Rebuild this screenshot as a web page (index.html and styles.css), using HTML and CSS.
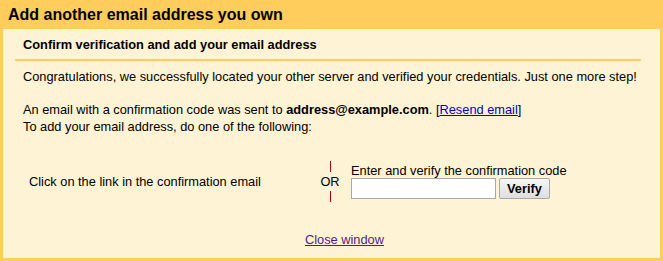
FILE: index.html
```html
<!DOCTYPE html>
<html lang="en">
<head>
    <meta charset="UTF-8">
    <title>Add another email address you own</title>
    <link rel="stylesheet" href="styles.css">
</head>
<body>
    <div class="dialog">
        <h1 class="dialog-title">Add another email address you own</h1>

        <div class="dialog-body">
            <h2 class="section-title">Confirm verification and add your email address</h2>

            <p class="msg">Congratulations, we successfully located your other server and verified your credentials. Just one more step!</p>

            <p class="msg sent">
                An email with a confirmation code was sent to <b>address@example.com</b>. [<a href="#" class="link">Resend email</a>]<br>
                To add your email address, do one of the following:
            </p>

            <div class="choices">
                <div class="choice-link">Click on the link in the confirmation email</div>
                <div class="or">
                    <span class="or-bar"></span>
                    <span class="or-text">OR</span>
                    <span class="or-bar"></span>
                </div>
                <div class="choice-code">
                    <label for="code">Enter and verify the confirmation code</label>
                    <div class="code-row">
                        <input type="text" id="code" class="code-input">
                        <button class="btn-verify">Verify</button>
                    </div>
                </div>
            </div>

            <div class="footer">
                <a href="#" class="link visited">Close window</a>
            </div>
        </div>
    </div>
</body>
</html>
```

FILE: styles.css
```css
body {
    margin: 0;
    font-family: "Liberation Sans", Arial, sans-serif;
    font-size: 12.8px;
    color: #000;
}

.dialog {
    background-color: #fecd5b;
    width: 663px;
    height: 261px;
    box-sizing: border-box;
    padding: 0 3px 3px 3px;
    display: flex;
    flex-direction: column;
}

.dialog-title {
    margin: 0;
    height: 29px;
    line-height: 30px;
    padding-left: 5px;
    font-size: 16px;
    font-weight: bold;
}

.dialog-body {
    flex: 1;
    background-color: #fff3d5;
    padding: 0 19px 0 12px;
}

.section-title {
    margin: 0;
    padding: 8px 0 6px 8px;
    font-size: 12.8px;
    font-weight: bold;
    line-height: 16px;
    border-bottom: 2px solid #fecd5b;
}

.msg {
    margin: 8px 0 0 8px;
    line-height: 16px;
    white-space: nowrap;
}

.msg.sent {
    margin-top: 16px;
    line-height: 17px;
}

.link {
    color: #0000cc;
}

.link.visited {
    color: #551a8b;
}

.choices {
    display: flex;
    align-items: center;
    margin-top: 26px;
    padding-left: 14px;
}

.choice-link {
    width: 290px;
}

.or {
    display: flex;
    flex-direction: column;
    align-items: center;
    width: 22px;
    margin-right: 10px;
}

.or-bar {
    width: 1px;
    height: 11px;
    background-color: #b0000f;
}

.or-text {
    line-height: 19px;
}

.choice-code {
    padding-bottom: 2px;
}

.choice-code label {
    display: block;
    line-height: 15px;
}

.code-row {
    display: flex;
    align-items: center;
    gap: 3px;
    margin-top: 0;
}

.code-input {
    width: 139px;
    height: 15px;
    padding: 2px;
    border: 1px solid #a9a9a9;
    background: #fff;
    font: inherit;
}

.btn-verify {
    height: 21px;
    padding: 0 7px;
    font-family: inherit;
    font-size: 12.8px;
    font-weight: bold;
    border: 1px solid #a9a9a9;
    border-radius: 2px;
    background: linear-gradient(#f6f6f6, #dedede);
}

.footer {
    text-align: center;
    margin-top: 30px;
    padding-left: 33px;
}
```
